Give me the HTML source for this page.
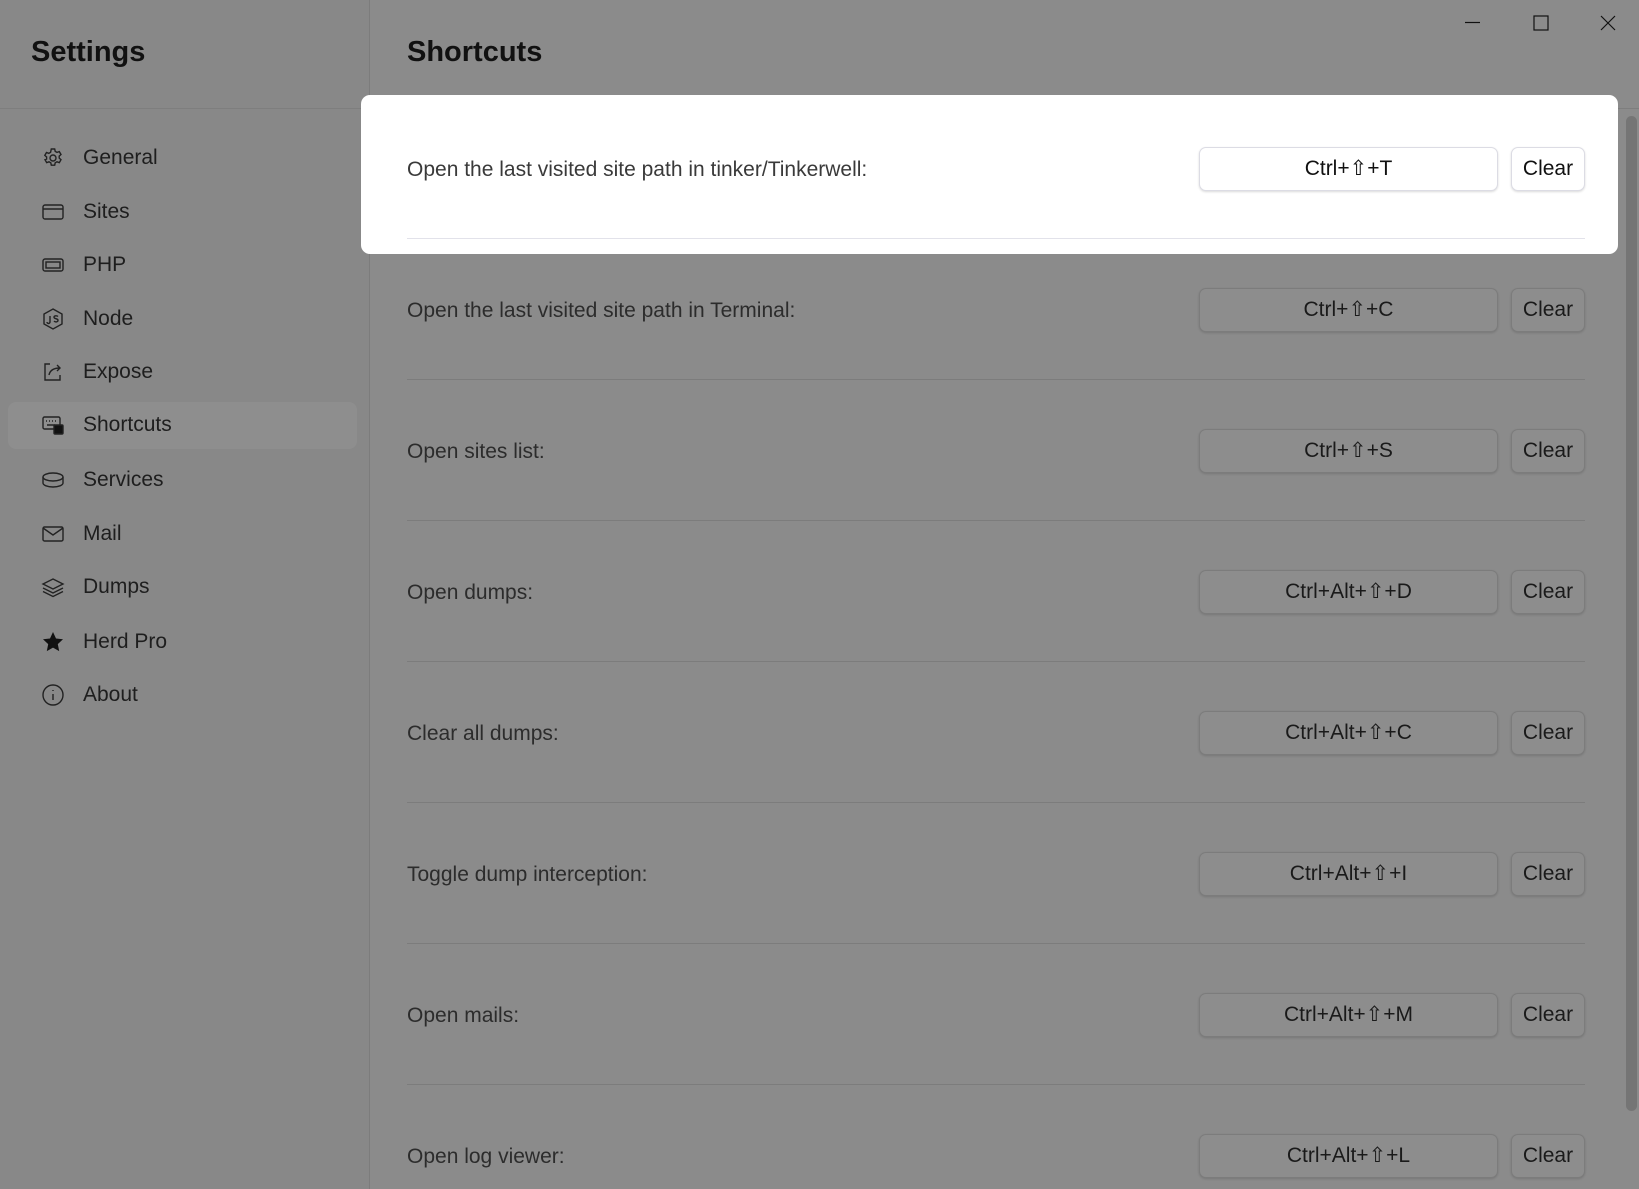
<!DOCTYPE html>
<html style="background:#8b8b8b"><head><meta charset="utf-8"><style>
*{margin:0;padding:0;box-sizing:border-box}
html,body{width:1639px;height:1189px;overflow:hidden}
body{background:#8b8b8b;font-family:"Liberation Sans","DejaVu Sans",sans-serif;position:relative;color:#1c1c1c}
.side{position:absolute;left:0;top:0;width:370px;height:1189px;background:#888;border-right:1px solid #7c7c7c}
.hline{position:absolute;left:0;top:108px;width:1639px;height:1px;background:#7e7e7e}
h1{position:absolute;font-size:29px;font-weight:bold;color:#111;top:36px}
.nav{position:absolute;left:0;width:370px;height:46px}
.nav svg{position:absolute;left:41px;top:11px;width:24px;height:24px}
.nav span{position:absolute;left:83px;top:11px;font-size:21px;color:#1e1e1e}
.act{background:#8e8e8e;left:8px;width:349px;border-radius:8px;top:402px;height:47px;position:absolute}
.row{position:absolute;left:407px;width:1178px;height:141px}
.row .lbl{position:absolute;left:0;top:0;line-height:1;font-size:21px;color:#2c2c2c}
.row .key{position:absolute;left:792px;width:299px;height:44px;border:1px solid #7c7c7c;background:#8d8d8d;border-radius:7px;box-shadow:0 1px 2px rgba(0,0,0,.15);font-size:21px;text-align:center;line-height:42px;color:#1a1a1a}
.row .clr{position:absolute;left:1104px;width:74px;height:44px;border:1px solid #7c7c7c;background:#8d8d8d;border-radius:7px;box-shadow:0 1px 2px rgba(0,0,0,.15);font-size:21px;text-align:center;line-height:42px;color:#1a1a1a}
.row .ln{position:absolute;left:0;width:1178px;height:1px;background:#7c7c7c}
.card{position:absolute;left:361px;top:95px;width:1257px;height:159px;background:#fff;border-radius:9px}
.row.hi .lbl{color:#3a3a3a}
.row.hi .key,.row.hi .clr{background:#fff;border-color:#dcdce4;color:#111}
.row.hi .ln{background:#e2e2ea}
.sb{position:absolute;left:1626px;top:116px;width:11px;height:995px;background:#757575;border-radius:6px}
</style></head><body>
<div class="side">
<h1 style="left:31px">Settings</h1>
<div class="act"></div>
<div class="nav" style="top:135px"><svg viewBox="0 0 24 24" fill="none" stroke="#222" stroke-width="1.4"><circle cx="12" cy="12" r="3"/><path d="M10.3 3h3.4l.5 2.4 1.8 1 2.3-.8 1.7 2.9-1.8 1.6v2l1.8 1.6-1.7 2.9-2.3-.8-1.8 1-.5 2.4h-3.4l-.5-2.4-1.8-1-2.3.8-1.7-2.9L5.6 13v-2L3.8 9.4l1.7-2.9 2.3.8 1.8-1z"/></svg><span>General</span></div>
<div class="nav" style="top:189px"><svg viewBox="0 0 24 24" fill="none" stroke="#222" stroke-width="1.4"><rect x="2" y="5" width="20" height="14" rx="2"/><path d="M2 9h20"/></svg><span>Sites</span></div>
<div class="nav" style="top:242px"><svg viewBox="0 0 24 24" fill="none" stroke="#222" stroke-width="1.4"><rect x="2" y="6" width="20" height="12" rx="2"/><rect x="5" y="9" width="14" height="6"/></svg><span>PHP</span></div>
<div class="nav" style="top:296px"><svg viewBox="0 0 24 24" fill="none" stroke="#222" stroke-width="1.4"><path d="M12 2l9 5v10l-9 5-9-5V7z"/><path d="M9 9v6a1.5 1.5 0 01-3 0M17 9.5c-1-1-4-1-4 .8s4 1 4 3-3 2-4 .8"/></svg><span>Node</span></div>
<div class="nav" style="top:349px"><svg viewBox="0 0 24 24" fill="none" stroke="#222" stroke-width="1.4"><path d="M9 4H4v16h15v-5"/><path d="M8 15c1-5 5-7 11-7M16 5l3 3-3 3"/></svg><span>Expose</span></div>
<div class="nav" style="top:402px"><svg viewBox="0 0 24 24" fill="none" stroke="#222" stroke-width="1.4"><rect x="2" y="4" width="17" height="12" rx="1.5"/><path d="M5 8h1M8 8h1M11 8h1M14 8h1M6 12h8"/><rect x="13" y="12" width="9" height="9" rx="1" fill="#111"/></svg><span>Shortcuts</span></div>
<div class="nav" style="top:457px"><svg viewBox="0 0 24 24" fill="none" stroke="#222" stroke-width="1.4"><ellipse cx="12" cy="9" rx="10" ry="4"/><path d="M2 9v6c0 2.2 4.5 4 10 4s10-1.8 10-4V9"/></svg><span>Services</span></div>
<div class="nav" style="top:511px"><svg viewBox="0 0 24 24" fill="none" stroke="#222" stroke-width="1.4"><rect x="2" y="5" width="20" height="14" rx="1.5"/><path d="M2 6l10 7 10-7"/></svg><span>Mail</span></div>
<div class="nav" style="top:564px"><svg viewBox="0 0 24 24" fill="none" stroke="#222" stroke-width="1.4"><path d="M12 4l10 5-10 5L2 9z"/><path d="M2 13l10 5 10-5M2 16.5l10 5 10-5"/></svg><span>Dumps</span></div>
<div class="nav" style="top:619px"><svg viewBox="0 0 24 24"><path fill="#111" d="M12 2l3 6.5 7 .8-5.2 4.8 1.4 7L12 17.6 5.8 21.1l1.4-7L2 9.3l7-.8z"/></svg><span>Herd Pro</span></div>
<div class="nav" style="top:672px"><svg viewBox="0 0 24 24" fill="none" stroke="#222" stroke-width="1.4"><circle cx="12" cy="12" r="10"/><path d="M12 11v6M12 7v1"/></svg><span>About</span></div>
</div>
<div class="hline"></div>
<h1 style="left:407px">Shortcuts</h1>
<svg style="position:absolute;left:1462px;top:12px" width="160" height="22" fill="none" stroke="#111" stroke-width="1.2"><path d="M3 10.5h15"/><rect x="72" y="4" width="14" height="14"/><path d="M139 4l14 14M153 4l-14 14"/></svg>
<div class="sb"></div>
<div class="card"></div>
<div id="rows"></div>
<script>
var d=[["Open the last visited site path in tinker/Tinkerwell:","Ctrl+⇧+T"],["Open the last visited site path in Terminal:","Ctrl+⇧+C"],["Open sites list:","Ctrl+⇧+S"],["Open dumps:","Ctrl+Alt+⇧+D"],["Clear all dumps:","Ctrl+Alt+⇧+C"],["Toggle dump interception:","Ctrl+Alt+⇧+I"],["Open mails:","Ctrl+Alt+⇧+M"],["Open log viewer:","Ctrl+Alt+⇧+L"]];
var h="";
d.forEach(function(r,i){var t=110+i*141;
h+='<div class="row'+(i==0?' hi':'')+'" style="top:'+t+'px"><div class="lbl" style="top:49px">'+r[0]+'</div><div class="key" style="top:37px">'+r[1]+'</div><div class="clr" style="top:37px">Clear</div>'+(i<7?'<div class="ln" style="top:128px"></div>':'')+'</div>';});
document.getElementById("rows").innerHTML=h;
</script>
</body></html>
